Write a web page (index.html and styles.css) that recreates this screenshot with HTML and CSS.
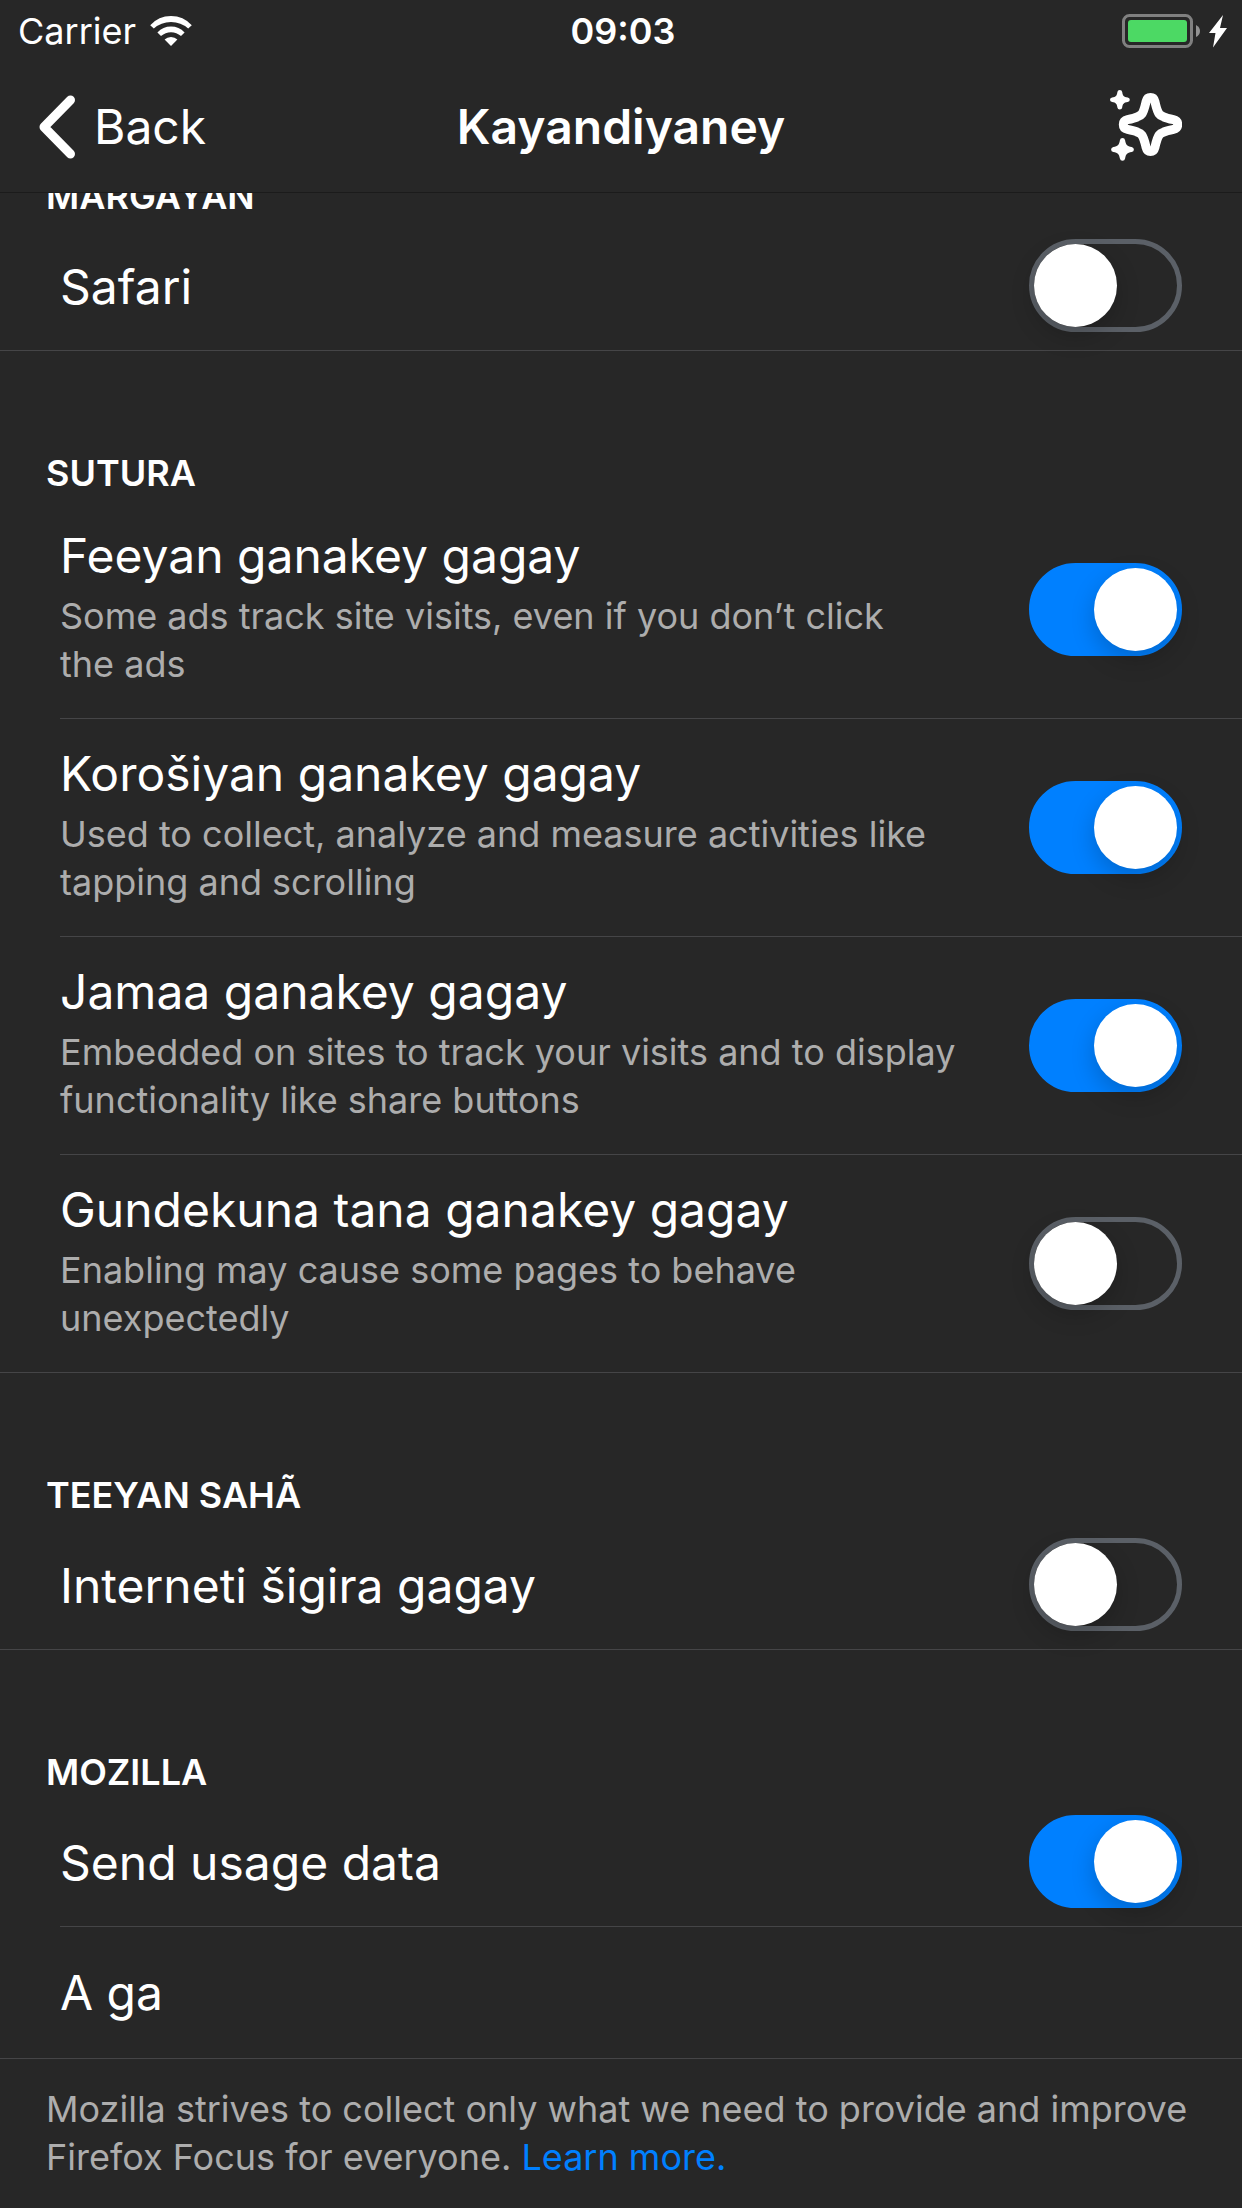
FILE: index.html
```html
<!DOCTYPE html>
<html lang="ses">
<head>
<meta charset="utf-8">
<meta name="viewport" content="width=device-width, initial-scale=1">
<title>Kayandiyaney</title>
<link rel="stylesheet" href="styles.css">
</head>
<body>
<header class="top">
  <div class="status">
    <div class="status-left">
      <span>Carrier</span>
      <svg width="42" height="30" viewBox="0 0 42 30" fill="#fff" aria-hidden="true">
        <path d="M21 30 14.6 23.6Q17.2 21 21 21T27.4 23.6Z"/>
        <path d="M7.4 16.4Q13 10.500 21 10.500T34.6 16.4L31 20Q26.600 16.200 21 16.200T11 20Z"/>
        <path d="M.2 9.200Q8.600 0 21 0T41.800 9.200L38.200 12.600Q31 6 21 6T3.800 12.600Z"/>
      </svg>
    </div>
    <time class="clock">09:03</time>
    <div class="status-right">
      <svg width="106" height="34" viewBox="0 0 106 34" aria-hidden="true">
        <rect x="1.500" y="1.500" width="68" height="31" rx="6" fill="none" stroke="#808080" stroke-width="3"/>
        <rect x="6" y="6" width="59" height="22" rx="3" fill="#4cd964"/>
        <path d="M74 11Q78 13 78 17T74 23Z" fill="#929292"/>
        <path d="M101 1 87 19h6.500L91 33.500 105 14h-7Z" fill="#fff"/>
      </svg>
    </div>
  </div>
  <nav class="nav">
    <button class="back" type="button">
      <svg width="38" height="64" viewBox="0 0 38 64" fill="none" stroke="#fff" stroke-width="9" stroke-linecap="round" stroke-linejoin="round" aria-hidden="true"><path d="M32.500 5 6 32 32.500 59"/></svg>
      <span>Back</span>
    </button>
    <h1 class="title">Kayandiyaney</h1>
    <button class="whats-new" type="button" aria-label="What's new">
      <svg width="72" height="74" viewBox="0 0 72 74" fill="#fff" aria-hidden="true">
        <path d="M40.500 7.500C43 7.500 44.300 9 44.900 11.500C46.400 17.800 47 21 49.200 24Q50.500 25.800 53.500 26.800C56.500 28.200 60 28.900 63.500 29.600C66.300 30.200 67.700 32 67.700 34.500S66.300 38.800 63.500 39.400C60 40.100 56.500 40.800 53.500 42.200Q50.500 43.200 49.200 45C47 48 46.400 51.200 44.900 57.500C44.300 60 43 61.500 40.500 61.500S36.700 60 36.100 57.500C34.600 51.200 34 48 31.800 45Q30.500 43.200 27.500 42.200C24.500 40.800 21 40.100 17.500 39.400C14.700 38.800 13.300 37 13.300 34.500S14.700 30.200 17.500 29.600C21 28.900 24.500 28.200 27.500 26.800Q30.500 25.800 31.800 24C34 21 34.600 17.800 36.100 11.500C36.700 9 38 7.500 40.500 7.500Z" fill="none" stroke="#fff" stroke-width="9"/>
        <path d="M9.800 0q2.200 0 2.400 2c.5 3.500 1.500 5 5.500 5.500q2.100.5 2.100 2.300t-2.100 2.300c-4 .5-5 2-5.500 5.500q-.2 2-2.400 2t-2.400-2C6.900 14.100 5.900 12.600 2.100 12.100Q0 11.600 0 9.800t2.100-2.300C5.900 7 6.900 5.500 7.400 2q.2-2 2.400-2Z"/>
        <path d="M12.500 48q2.200 0 2.600 2.200c.7 4.500 2 6 6.600 6.700q2.200.5 2.200 2.500t-2.200 2.500c-4.600.7-5.900 2.200-6.600 6.700q-.4 2.200-2.600 2.200t-2.600-2.200c-.7-4.500-2-6-6.600-6.700q-2.200-.5-2.200-2.500t2.200-2.500c4.600-.7 5.900-2.200 6.600-6.700q.4-2.200 2.600-2.200Z"/>
      </svg>
    </button>
  </nav>
</header>
<main>
  <section>
    <h2 class="heading scrolled">MARGAYAN</h2>
    <div class="row last">
      <label class="name" for="safari">Safari</label>
      <input class="switch" type="checkbox" role="switch" id="safari">
    </div>
  </section>
  <section>
    <h2 class="heading">SUTURA</h2>
    <div class="row tall">
      <div class="text">
        <label class="name" for="ads">Feeyan ganakey gagay</label>
        <p class="note">Some ads track site visits, even if you don’t click the&nbsp;ads</p>
      </div>
      <input class="switch" type="checkbox" role="switch" id="ads" checked>
    </div>
    <div class="row tall">
      <div class="text">
        <label class="name" for="analytics">Korošiyan ganakey gagay</label>
        <p class="note">Used to collect, analyze and measure activities like tapping and scrolling</p>
      </div>
      <input class="switch" type="checkbox" role="switch" id="analytics" checked>
    </div>
    <div class="row tall">
      <div class="text">
        <label class="name" for="social">Jamaa ganakey gagay</label>
        <p class="note">Embedded on sites to track your visits and to display functionality like share buttons</p>
      </div>
      <input class="switch" type="checkbox" role="switch" id="social" checked>
    </div>
    <div class="row tall last">
      <div class="text">
        <label class="name" for="content">Gundekuna tana ganakey gagay</label>
        <p class="note">Enabling may cause some pages to behave unexpectedly</p>
      </div>
      <input class="switch" type="checkbox" role="switch" id="content">
    </div>
  </section>
  <section>
    <h2 class="heading">TEEYAN SAHÃ</h2>
    <div class="row last">
      <label class="name" for="fonts">Interneti šigira gagay</label>
      <input class="switch" type="checkbox" role="switch" id="fonts">
    </div>
  </section>
  <section>
    <h2 class="heading">MOZILLA</h2>
    <div class="row">
      <label class="name" for="usage">Send usage data</label>
      <input class="switch" type="checkbox" role="switch" id="usage" checked>
    </div>
    <div class="row plain last">
      <span class="name">A ga</span>
    </div>
    <p class="footnote">Mozilla strives to collect only what we need to provide and improve Firefox Focus for everyone. <a href="#learn-more">Learn more.</a></p>
  </section>
</main>
</body>
</html>
```
FILE: styles.css
```css
* {
  box-sizing: border-box;
}

body {
  margin: 0;
  background: #272727;
  color: #fff;
  font-family: Inter, "Liberation Sans", sans-serif;
  font-size: 36px;
  line-height: 48px;
}

h1, h2, p {
  margin: 0;
}

button {
  padding: 0;
  border: 0;
  background: none;
  color: inherit;
  font: inherit;
}

svg {
  display: block;
}

.top {
  border-bottom: 1px solid #1b1b1b;
}

.status,
.nav {
  display: grid;
  grid-template-columns: 1fr auto 1fr;
  align-items: center;
}

.status {
  height: 62px;
  padding: 0 14px 0 18px;
}

.status-left {
  display: flex;
  align-items: center;
  gap: 14px;
}

.status-right {
  justify-self: end;
}

.clock {
  font-weight: 600;
}

.nav {
  height: 130px;
  padding: 0 38px;
}

.back {
  display: flex;
  align-items: center;
  gap: 18px;
  font-size: 48px;
}

.title {
  font-size: 48px;
  font-weight: 600;
}

.whats-new {
  justify-self: end;
  margin-right: 22px;
}

.heading {
  display: flex;
  align-items: flex-end;
  height: 150px;
  padding: 0 46px 4px;
  font-size: 36px;
  font-weight: 600;
}

/* The first group is scrolled partly under the navigation bar. */
.heading.scrolled {
  height: 31px;
  overflow: hidden;
}

.row {
  display: flex;
  align-items: center;
  justify-content: space-between;
  min-height: 127px;
  margin-left: 60px;
  padding-right: 60px;
  border-bottom: 1px solid #454547;
}

.row.last {
  margin-left: 0;
  padding-left: 60px;
}

.row.tall {
  min-height: 218px;
}

.row.plain {
  min-height: 132px;
}

.text {
  display: flex;
  flex-direction: column;
  gap: 6px;
  max-width: 920px;
  padding-bottom: 6px;
}

.name {
  font-size: 48px;
  line-height: 60px;
}

.note,
.footnote {
  color: #adadad;
}

.footnote {
  padding: 26px 46px;
}

.footnote a {
  color: #0080ff;
  text-decoration: none;
}

.switch {
  appearance: none;
  flex: none;
  width: 153px;
  height: 93px;
  margin: 0 0 4px;
  padding: 0;
  border: 5px solid #5b6067;
  border-radius: 47px;
}

.tall .switch {
  margin: 0;
}

.switch::before {
  content: "";
  display: block;
  width: 83px;
  height: 83px;
  border-radius: 50%;
  background: #fff;
  box-shadow: 0 9px 24px rgb(0 0 0 / 20%);
}

.switch:checked {
  border-color: #0080ff;
  background: #0080ff;
}

.switch:checked::before {
  margin-left: auto;
}
```
